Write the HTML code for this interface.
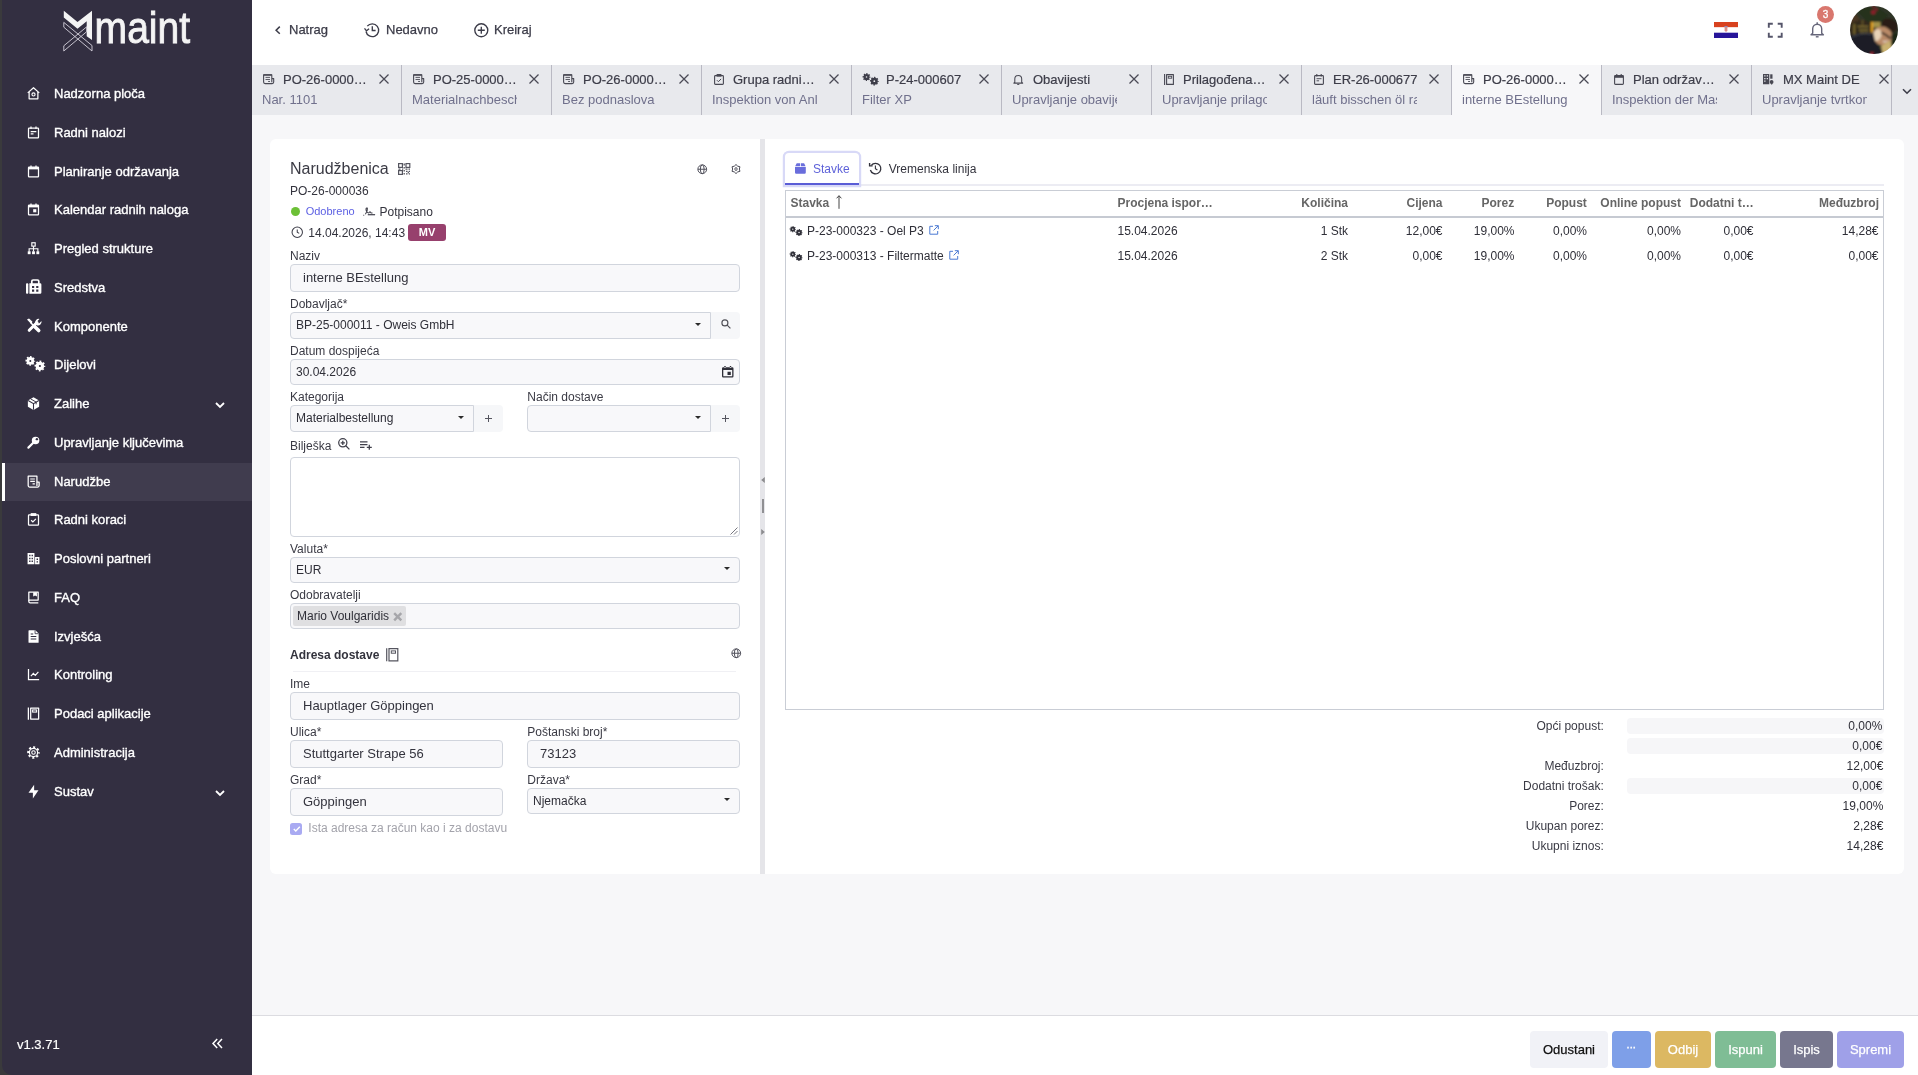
<!DOCTYPE html>
<html lang="hr">
<head>
<meta charset="utf-8">
<title>Narudžbenica PO-26-000036</title>
<style>
*{box-sizing:border-box;margin:0;padding:0}
html,body{width:1918px;height:1075px;overflow:hidden;background:#f7f7f9}
body{font-family:"Liberation Sans",Arial,Helvetica,sans-serif;font-size:12px;color:#33333d;position:relative;-webkit-font-smoothing:antialiased;will-change:transform}
.abs{position:absolute}
svg{display:block;overflow:visible}
/* sidebar */
#side{position:absolute;left:0;top:0;width:252px;height:1075px;background:#332f41}

.mi{position:absolute;left:2px;width:250px;height:38px;color:#fff;font-size:13px;line-height:38px;-webkit-text-stroke:.35px #fff}
.mi span{position:absolute;left:52px;top:0;white-space:nowrap}
.mi svg{position:absolute;left:24px;top:10.5px;width:15px;height:15px;fill:#fff}
.mi.act{background:#403c4e}
.mi.act:before{content:"";position:absolute;left:0;top:0;width:3px;height:100%;background:#fff}
.mi .chev{left:212px;top:14px;width:12px;height:12px;fill:none;stroke:#fff;stroke-width:1.8}
/* header */
#head{position:absolute;left:252px;top:0;width:1666px;height:65px;background:#fff}
.nav{position:absolute;top:22px;font-size:13px;line-height:16px;color:#3b3b48;white-space:nowrap;-webkit-text-stroke:.25px #3b3b48}
/* tab bar */
#tabs{position:absolute;left:252px;top:65px;width:1666px;height:50px;background:#e8e9ed}
.tab{position:absolute;top:0;width:150px;height:50px;border-right:1px solid #b9b9c3}
.tab.on{background:#f7f7f9}
.tab .tt{position:absolute;left:31px;top:7px;width:85px;font-size:13px;line-height:16px;color:#3d3d49;white-space:nowrap;overflow:hidden;text-overflow:ellipsis;-webkit-text-stroke:.2px #3d3d49}
.tab .st{position:absolute;left:10px;top:27px;width:105px;font-size:13px;line-height:16px;color:#70708c;white-space:nowrap;overflow:hidden}
.tab .x{position:absolute;left:127px;top:9px;width:10px;height:10px;stroke:#4a4a55;stroke-width:1.25;fill:none}
/* cards */
.card{position:absolute;background:#fff;border-radius:6px}
.lbl{position:absolute;font-size:12px;line-height:14px;color:#3a3a44;white-space:nowrap}
.inp{position:absolute;background:#f8f8fa;border:1px solid #d1d5dd;border-radius:4px;font-size:13px;color:#33333d;padding-left:12px;white-space:nowrap;overflow:hidden}
.sel{position:absolute;background:#f8f8fa;border:1px solid #d1d5dd;border-radius:4px;font-size:12px;color:#2f2f38;padding-left:5px;white-space:nowrap;overflow:hidden}
.sel:after{content:"";position:absolute;right:8.800px;top:50%;margin-top:-2.600px;border:3.700px solid transparent;border-top:3.800px solid #2b2b2b;border-bottom:0}
.sel.noarr:after{display:none}
.sel.grp{border-radius:4px 0 0 4px}
.btnx{position:absolute;background:#f6f7f9;border-radius:0 4px 4px 0}
/* table */
.th{position:absolute;top:197px;font-size:12px;line-height:14px;font-weight:bold;color:#666;white-space:nowrap}
.td{position:absolute;font-size:12px;line-height:14px;color:#2f2f38;white-space:nowrap}
.r{text-align:right}
.tl{position:absolute;font-size:12px;line-height:14px;color:#3a3a44;white-space:nowrap;text-align:right}
.tbox{position:absolute;left:1627px;width:257px;height:16px;background:#f6f6f8;border-radius:4px}
/* footer */
#foot{position:absolute;left:252px;top:1015px;width:1666px;height:60px;background:#fff;border-top:1px solid #dcdce1}
.btn{position:absolute;top:1031px;height:37px;border-radius:4px;font-size:13px;line-height:37px;text-align:center;color:#fff;white-space:nowrap;-webkit-text-stroke:.25px currentColor}
</style>
</head>
<body>

<!-- SIDEBAR -->
<div id="side">
<svg class="abs" style="left:64px;top:10px" width="130" height="44" viewBox="64 10 130 44"><path d="M63.800 10.800 77.500 22.100 92 10.800V40l-5.300-3.700v-15l-9.200 7.500-13.700-11.300z" fill="#f4f4f4"/><path d="M63.800 22.400 92 45.500V51L63.800 27.200zM63.800 45.800l22.900-19v4.900L63.800 51z" fill="none" stroke="#d6d3dc" stroke-width=".9"/><text x="94.600" y="42.900" font-family="Liberation Sans,Arial,sans-serif" font-size="44.600" fill="#f4f4f4" stroke="#f4f4f4" stroke-width=".9" textLength="95.500" lengthAdjust="spacingAndGlyphs">maint</text></svg>
<div class="mi" style="top:75.1px"><svg viewBox="0 0 24 24"><path d="M2.800 11 12 2.800l9.200 8.200" fill="none" stroke="#fff" stroke-width="2" stroke-linejoin="round"/><path d="M5 9.500V20.500h14V9.500" fill="none" stroke="#fff" stroke-width="2" stroke-linejoin="round"/><circle cx="12" cy="13.500" r="2.500" fill="none" stroke="#fff" stroke-width="1.800"/></svg><span>Nadzorna ploča</span></div>
<div class="mi" style="top:114.1px"><svg viewBox="0 0 24 24"><rect x="4" y="5" width="16" height="15.500" rx="1" fill="none" stroke="#fff" stroke-width="2"/><path d="M8 2.200v4M16 2.200v4" stroke="#fff" stroke-width="2"/><path d="M7.500 10.500h9M7.500 14.200h4.500" stroke="#fff" stroke-width="1.800"/></svg><span>Radni nalozi</span></div>
<div class="mi" style="top:153.1px"><svg viewBox="0 0 24 24"><rect x="4" y="5" width="16" height="15.500" rx="1" fill="none" stroke="#fff" stroke-width="2"/><path d="M4 5h16v3.600H4z"/><path d="M8 2.200v4M16 2.200v4" stroke="#fff" stroke-width="2"/></svg><span>Planiranje održavanja</span></div>
<div class="mi" style="top:191.1px"><svg viewBox="0 0 24 24"><rect x="4" y="5" width="16" height="15.500" rx="1" fill="none" stroke="#fff" stroke-width="2"/><path d="M4 5h16v3.600H4z"/><path d="M8 2.200v4M16 2.200v4" stroke="#fff" stroke-width="2"/><rect x="11.500" y="11.500" width="5" height="5"/></svg><span>Kalendar radnih naloga</span></div>
<div class="mi" style="top:230.1px"><svg viewBox="0 0 24 24"><rect x="9.300" y="2.800" width="5.400" height="5.400" fill="none" stroke="#fff" stroke-width="1.800"/><path d="M12 8.200v8.500M5 17v-4.600h14V17" fill="none" stroke="#fff" stroke-width="1.800"/><rect x="2.800" y="16.500" width="4.600" height="4.600"/><rect x="9.700" y="16.500" width="4.600" height="4.600"/><rect x="16.600" y="16.500" width="4.600" height="4.600"/></svg><span>Pregled strukture</span></div>
<div class="mi" style="top:269.1px"><svg viewBox="0 0 15.400 14.700" style="left:23.8px;top:10.05px;width:15.4px;height:14.7px"><path d="M5.800 5V2.300a1.300 1.300 0 0 1 1.300-1.300h4.400a1.300 1.300 0 0 1 1.300 1.300V5" fill="none" stroke="#fff" stroke-width="1.700"/><rect x="0" y="4.300" width="2.300" height="10.400" rx=".9"/><path fill-rule="evenodd" d="M3.400 4.300h10.800a1.200 1.200 0 0 1 1.200 1.200v8a1.200 1.200 0 0 1-1.200 1.200H3.400zM6 7v2.100h2.200V7zM10.200 7v2.100h2.200V7zM6 10.600v2.100h2.200v-2.100zM10.200 10.600v2.100h2.200v-2.100z"/></svg><span>Sredstva</span></div>
<div class="mi" style="top:308.1px"><svg viewBox="0 0 15.400 15" style="left:23.8px;top:9.7px;width:15.4px;height:15px"><path d="M3.200 12.300 11 4.500" stroke="#fff" stroke-width="3" stroke-linecap="round"/><path d="M9.300 5.500a3.600 3.600 0 0 1 4.200-4.600l-2.200 2.300.3 1.700 1.700.3 2.200-2.200a3.600 3.600 0 0 1-4.600 4.200z"/><path d="M1 1.400 3 .4l3.300 3-.3 1.500-1.500.3z"/><path d="M4.500 4.500l4 4" stroke="#fff" stroke-width="1.600"/><path d="M8.800 8.700l3.900 3.900" stroke="#fff" stroke-width="3.600" stroke-linecap="round"/></svg><span>Komponente</span></div>
<div class="mi" style="top:346.1px"><svg viewBox="0 0 19 15" style="left:23.8px;top:10.2px;width:19px;height:15px"><circle cx="4.3" cy="4.9" r="2.4" fill="none" stroke="#fff" stroke-width="2.8"/><circle cx="4.3" cy="4.9" r="4.0" fill="none" stroke="#fff" stroke-width="1.7" stroke-dasharray="1.571 1.571" stroke-dashoffset="0.785"/><circle cx="13.9" cy="10" r="2.7" fill="none" stroke="#fff" stroke-width="3.2"/><circle cx="13.9" cy="10" r="4.5" fill="none" stroke="#fff" stroke-width="1.8" stroke-dasharray="1.767 1.767" stroke-dashoffset="0.884"/></svg><span>Dijelovi</span></div>
<div class="mi" style="top:385.1px"><svg viewBox="0 0 24 24"><path d="M12 1.800 21 7v10l-9 5.200L3 17V7z"/><path d="M3.400 7.200 12 12.200l8.600-5M12 12.200V22" fill="none" stroke="#332f41" stroke-width="1.700"/><path d="M7.400 4.600l8.800 5.100v3.600" fill="none" stroke="#332f41" stroke-width="1.500"/></svg><span>Zalihe</span><svg class="chev" viewBox="0 0 12 12"><path d="M2 4l4 4 4-4"/></svg></div>
<div class="mi" style="top:424.1px"><svg viewBox="0 0 24 24"><path d="M11.200 12.800 3.800 20.200" stroke="#fff" stroke-width="3.400" stroke-linecap="round"/><circle cx="15.300" cy="8.700" r="6"/><circle cx="17.400" cy="6.600" r="1.900" fill="#332f41"/></svg><span>Upravljanje ključevima</span></div>
<div class="mi act" style="top:463.1px"><svg viewBox="0 0 24 24"><path d="M17.500 13V3.500h-14v15a2.500 2.500 0 0 0 2.500 2.500h12.500a2.500 2.500 0 0 0 2.500-2.500V13z" fill="none" stroke="#fff" stroke-width="2" stroke-linejoin="round"/><path d="M17.500 13v6" stroke="#fff" stroke-width="2"/><path d="M6.800 8h7.400M6.800 11.800h7.400M10.500 15.800h3.700" stroke="#fff" stroke-width="1.800"/></svg><span>Narudžbe</span></div>
<div class="mi" style="top:501.1px"><svg viewBox="0 0 24 24"><rect x="4" y="4.500" width="16" height="16.500" rx="1" fill="none" stroke="#fff" stroke-width="2"/><rect x="7.500" y="1.800" width="9" height="4.600"/><path d="M8.200 13.200l2.800 2.800 4.800-5" fill="none" stroke="#fff" stroke-width="1.900"/></svg><span>Radni koraci</span></div>
<div class="mi" style="top:540.1px"><svg viewBox="0 0 24 24"><path fill-rule="evenodd" d="M2.500 3h11v18h-11zM5 6v2.400h2.200V6zM8.900 6v2.400h2.200V6zM5 10.600V13h2.200v-2.400zM8.900 10.600V13h2.200v-2.400zM5 15.200v2.400h2.200v-2.400zM8.900 15.200v2.400h2.200v-2.400z"/><path fill-rule="evenodd" d="M14.500 9.500h7V21h-7zM16.900 12v2.300h2.300V12zM16.900 16.200v2.300h2.300v-2.300z"/></svg><span>Poslovni partneri</span></div>
<div class="mi" style="top:579.1px"><svg viewBox="0 0 24 24"><path d="M4.500 3.500h15V16h-15z" fill="none" stroke="#fff" stroke-width="2" stroke-linejoin="round"/><path d="M4.500 16v2.300a2.200 2.200 0 0 0 2.200 2.200h13" fill="none" stroke="#fff" stroke-width="2"/><path d="M11.500 3.500h6v7l-3-1.800-3 1.800z"/></svg><span>FAQ</span></div>
<div class="mi" style="top:618.1px"><svg viewBox="0 0 24 24"><path d="M5 1.800h10l5.200 5.200v14a1 1 0 0 1-1 1H5a1 1 0 0 1-1-1V2.800a1 1 0 0 1 1-1z"/><path d="M7.500 8h4M7.500 12h9M7.500 16h9" stroke="#332f41" stroke-width="1.800"/><path d="M14.500 2v5.500H20" fill="none" stroke="#332f41" stroke-width="1.300"/></svg><span>Izvješća</span></div>
<div class="mi" style="top:656.1px"><svg viewBox="0 0 24 24"><path d="M4 3v17.200h17" fill="none" stroke="#fff" stroke-width="2"/><path d="M7.800 14.500l4-4.200 3 3 5-5.600" fill="none" stroke="#fff" stroke-width="1.900"/></svg><span>Kontroling</span></div>
<div class="mi" style="top:695.1px"><svg viewBox="0 0 24 24"><path d="M7.500 3.200h12.700v17.600H7.500z" fill="none" stroke="#fff" stroke-width="2" stroke-linejoin="round"/><path d="M3.800 2.200v19.600" stroke="#fff" stroke-width="2"/><rect x="10.600" y="6.300" width="6.400" height="3.400" fill="none" stroke="#fff" stroke-width="1.700"/></svg><span>Podaci aplikacije</span></div>
<div class="mi" style="top:734.1px"><svg viewBox="0 0 24 24"><circle cx="12" cy="12" r="6.6" fill="none" stroke="#fff" stroke-width="1.9"/><circle cx="12" cy="12" r="8.6" fill="none" stroke="#fff" stroke-width="3" stroke-dasharray="3.377 3.377" stroke-dashoffset="1.689"/><circle cx="12" cy="12" r="2.800" fill="none" stroke="#fff" stroke-width="1.800"/></svg><span>Administracija</span></div>
<div class="mi" style="top:773.1px"><svg viewBox="0 0 24 24"><path d="M13 10h7l-9 13v-9H4l9-13v9z"/></svg><span>Sustav</span><svg class="chev" viewBox="0 0 12 12"><path d="M2 4l4 4 4-4"/></svg></div>
<div class="abs" style="left:17px;top:1037px;font-size:13px;line-height:16px;color:#fff;-webkit-text-stroke:.2px #fff">v1.3.71</div>
<svg class="abs" style="left:212px;top:1038px" width="11" height="11" viewBox="0 0 11 11" fill="none" stroke="#fff" stroke-width="1.500"><path d="M5.200 1 1 5.500l4.200 4.500M10 1 5.800 5.500 10 10"/></svg>
<div class="abs" style="left:0;top:0;width:2px;height:1075px;background:#3a3a3c"></div>
<svg class="abs" style="left:2px;top:1065px" width="10" height="10" viewBox="0 0 10 10"><path d="M0 0v10h10A10 10 0 0 1 0 0z" fill="#3a3a3c"/></svg>
</div>

<!-- HEADER -->
<div id="head">
<svg class="abs" style="left:23.400px;top:26.200px" width="5.600" height="8.400" viewBox="0 0 5.600 8.400" fill="none" stroke="#3b3b48" stroke-width="1.500"><path d="M4.800.6 1.100 4.200l3.700 3.600"/></svg>
<div class="nav" style="left:37px">Natrag</div>
<svg class="abs" style="left:112.300px;top:22.400px" width="16" height="16" viewBox="0 0 16 16" fill="none" stroke="#3b3b48" stroke-width="1.350"><path d="M3.300 4.200A6.400 6.400 0 1 1 2 9.500"/><path d="M.5 6.300l2 2.500 2.600-2" stroke-width="1.300"/><path d="M8.300 4.300v4.200h3.300"/></svg>
<div class="nav" style="left:134px">Nedavno</div>
<svg class="abs" style="left:221.800px;top:22.800px" width="14.600" height="14.600" viewBox="0 0 14.600 14.600" fill="none" stroke="#3b3b48" stroke-width="1.350"><circle cx="7.300" cy="7.300" r="6.500"/><path d="M7.300 3.800v7M3.800 7.300h7"/></svg>
<div class="nav" style="left:242px">Kreiraj</div>
<svg class="abs" style="left:1462px;top:22px" width="24" height="16" viewBox="0 0 24 16"><rect width="24" height="5.400" fill="#d8421f"/><rect y="5.400" width="24" height="5.300" fill="#fff"/><rect y="10.700" width="24" height="5.300" fill="#27159a"/><path d="M10.600 5h2.800v3.300a1.400 1.400 0 0 1-2.800 0z" fill="#dd8f88"/><path d="M10.400 4.100h3.200v1H10.400z" fill="#8c93c9"/></svg>
<svg class="abs" style="left:1516px;top:23px" width="14.500" height="14.500" viewBox="0 0 14.500 14.500" fill="none" stroke="#55556a" stroke-width="1.900"><path d="M.8 4.800V.8h4M9.700.8h4v4M13.700 9.700v4h-4M4.800 13.700h-4v-4"/></svg>
<svg class="abs" style="left:1557.500px;top:22.300px" width="14.400" height="15.600" viewBox="0 0 14.400 15.600" fill="none" stroke="#66667a" stroke-width="1.400"><path d="M2.700 11.300V6.800a4.500 4.500 0 0 1 9 0v4.500l1.700 1.500H1z" stroke-linejoin="round"/><path d="M5.800 14.800h2.800"/><path d="M7.200.3v2"/></svg>
<div class="abs" style="left:1565px;top:5.500px;width:17px;height:17px;border-radius:50%;background:#d9776e;color:#fff;font-size:10px;line-height:17px;text-align:center;-webkit-text-stroke:.3px #fff">3</div>
<svg class="abs" style="left:1598.200px;top:5.800px" width="48" height="48" viewBox="0 0 48 48"><defs><clipPath id="av"><circle cx="24" cy="24" r="24"/></clipPath><filter id="bl" x="-10%" y="-10%" width="120%" height="120%"><feGaussianBlur stdDeviation="1.1"/></filter></defs><g clip-path="url(#av)"><g filter="url(#bl)"><rect x="-4" y="-4" width="56" height="56" fill="#2e3627"/><path d="M-2 14h24v18H-2z" fill="#33291a"/><path d="M-2 9l8-1 4 6-12 4z" fill="#4a3524"/><path d="M8 6c5-5 14-6 22-3l8 6-6 8-14-1z" fill="#27301f"/><path d="M7.500 20.500h11M9 24h9.500M10 27h8" stroke="#8f7d3c" stroke-width="1.600" opacity=".85"/><path d="M4.300 18v12" stroke="#7d6c30" stroke-width="1.800"/><path d="M12.500 14v6" stroke="#5d4f28" stroke-width="2"/><rect x="20.800" y="16" width="2.200" height="10.500" fill="#e2a11f"/><rect x="23" y="16" width="7.500" height="5.500" fill="#a4924a"/><circle cx="23.300" cy="6.300" r="2.300" fill="#8d1f2b"/><circle cx="26.300" cy="3.600" r="1.400" fill="#8d1f2b"/><circle cx="23.500" cy="1" r="1.300" fill="#7d1f28"/><ellipse cx="39.500" cy="19.500" rx="8.500" ry="7" fill="#2a1e17" transform="rotate(25 39.500 19.500)"/><ellipse cx="32.500" cy="30" rx="10" ry="9.200" fill="#b98a68" transform="rotate(30 32.500 30)"/><ellipse cx="27.200" cy="29" rx="4.200" ry="6" fill="#e9d3b6" transform="rotate(15 27.200 29)"/><path d="M31.500 26.500l4.500 2.500 4.500 3.500" stroke="#2a211c" stroke-width="1.700" fill="none"/><path d="M33 35c1.500 1.200 3.500 1 4.500-.5" stroke="#e8dccd" stroke-width="1.200" fill="none"/><path d="M-2 31C6 26.500 16 26 23.500 27.500L25 35l4 6 4 9H-2z" fill="#1d1e25"/><path d="M2 31c6-3.500 13-4 20-3" stroke="#3d4049" stroke-width="1.300" fill="none"/><path d="M31 40l9.500-5.500 1.500 9L33 49z" fill="#c9b170"/><path d="M41 29l7-3v16l-5 1z" fill="#1d2519"/><circle cx="22" cy="47.500" r="1.700" fill="#8d1f2b"/></g></g></svg>
</div>

<!-- TABS -->
<div id="tabs">
<div class="tab" style="left:0px"><svg class="abs" style="left:10.85px;top:9.05px" width="11.3" height="10.1" viewBox="0 0 11.300 10.100"><path d="M8.800 4.600V.7H.6v7.400a1.500 1.500 0 0 0 1.500 1.500h7.100a1.500 1.500 0 0 0 1.500-1.500V4.600zM8.800 4.600v3.700" fill="none" stroke="#484853" stroke-width="1.1" stroke-linejoin="round"/><path d="M.6 1h8.200" fill="none" stroke="#484853" stroke-width="1.5"/><path d="M2.500 3.400h4.500M2.500 5.500h4.500M5.100 7.500h1.900" fill="none" stroke="#484853" stroke-width="0.9"/></svg><div class="tt">PO-26-000001</div><div class="st">Nar. 1101</div><svg class="x" viewBox="0 0 10 10"><path d="M.5.500l9 9M9.500.500l-9 9"/></svg></div>
<div class="tab" style="left:150px"><svg class="abs" style="left:10.85px;top:9.05px" width="11.3" height="10.1" viewBox="0 0 11.300 10.100"><path d="M8.800 4.600V.7H.6v7.400a1.500 1.500 0 0 0 1.500 1.500h7.100a1.500 1.500 0 0 0 1.500-1.500V4.600zM8.800 4.600v3.700" fill="none" stroke="#484853" stroke-width="1.1" stroke-linejoin="round"/><path d="M.6 1h8.200" fill="none" stroke="#484853" stroke-width="1.5"/><path d="M2.500 3.400h4.500M2.500 5.500h4.500M5.100 7.500h1.900" fill="none" stroke="#484853" stroke-width="0.9"/></svg><div class="tt">PO-25-000012</div><div class="st">Materialnachbeschaffung</div><svg class="x" viewBox="0 0 10 10"><path d="M.5.500l9 9M9.500.500l-9 9"/></svg></div>
<div class="tab" style="left:300px"><svg class="abs" style="left:10.85px;top:9.05px" width="11.3" height="10.1" viewBox="0 0 11.300 10.100"><path d="M8.800 4.600V.7H.6v7.400a1.500 1.500 0 0 0 1.500 1.500h7.100a1.500 1.500 0 0 0 1.500-1.500V4.600zM8.800 4.600v3.700" fill="none" stroke="#484853" stroke-width="1.1" stroke-linejoin="round"/><path d="M.6 1h8.200" fill="none" stroke="#484853" stroke-width="1.5"/><path d="M2.500 3.400h4.500M2.500 5.500h4.500M5.100 7.500h1.900" fill="none" stroke="#484853" stroke-width="0.9"/></svg><div class="tt">PO-26-000002</div><div class="st">Bez podnaslova</div><svg class="x" viewBox="0 0 10 10"><path d="M.5.500l9 9M9.500.500l-9 9"/></svg></div>
<div class="tab" style="left:450px"><svg class="abs" style="left:11.50px;top:8.60px" width="10" height="11" viewBox="0 0 10 11"><rect x=".6" y="1.600" width="8.800" height="8.800" rx=".8" fill="none" stroke="#484853" stroke-width="1.1"/><rect x="2.600" y="0" width="4.800" height="2.600" fill="#484853"/><path d="M2.900 6.200l1.500 1.500 2.700-2.800" fill="none" stroke="#484853" stroke-width="1"/></svg><div class="tt">Grupa radnih koraka</div><div class="st">Inspektion von Anlagen</div><svg class="x" viewBox="0 0 10 10"><path d="M.5.500l9 9M9.500.500l-9 9"/></svg></div>
<div class="tab" style="left:600px"><svg class="abs" style="left:10.500px;top:7.800px" width="15.5" height="12.2" viewBox="0 0 19 15"><circle cx="4.3" cy="4.9" r="2.4" fill="none" stroke="#3d3d49" stroke-width="2.8"/><circle cx="4.3" cy="4.9" r="4.0" fill="none" stroke="#3d3d49" stroke-width="1.7" stroke-dasharray="1.571 1.571" stroke-dashoffset="0.785"/><circle cx="13.9" cy="10" r="2.7" fill="none" stroke="#3d3d49" stroke-width="3.2"/><circle cx="13.9" cy="10" r="4.5" fill="none" stroke="#3d3d49" stroke-width="1.8" stroke-dasharray="1.767 1.767" stroke-dashoffset="0.884"/></svg><div class="tt" style="left:34px">P-24-000607</div><div class="st">Filter XP</div><svg class="x" viewBox="0 0 10 10"><path d="M.5.500l9 9M9.500.500l-9 9"/></svg></div>
<div class="tab" style="left:750px"><svg class="abs" style="left:11.25px;top:8.60px" width="10.5" height="11" viewBox="0 0 10.500 11"><path d="M1.800 8.200V5a3.450 3.450 0 0 1 6.900 0v3.200l1 .9H.8z" fill="none" stroke="#484853" stroke-width="1.05" stroke-linejoin="round"/><path d="M4.200 10.400h2.100" fill="none" stroke="#484853" stroke-width="1"/></svg><div class="tt">Obavijesti</div><div class="st">Upravljanje obavijestima</div><svg class="x" viewBox="0 0 10 10"><path d="M.5.500l9 9M9.500.500l-9 9"/></svg></div>
<div class="tab" style="left:900px"><svg class="abs" style="left:11.50px;top:8.60px" width="10" height="11" viewBox="0 0 10 11"><path d="M2.600.6h6.800v9.800H2.600z" fill="none" stroke="#484853" stroke-width="1.1" stroke-linejoin="round"/><path d="M.6 0v11" fill="none" stroke="#484853" stroke-width="1.1"/><rect x="4.300" y="2.300" width="3.400" height="1.900" fill="none" stroke="#484853" stroke-width="0.9"/></svg><div class="tt">Prilagođena polja</div><div class="st">Upravljanje prilagođenim</div><svg class="x" viewBox="0 0 10 10"><path d="M.5.500l9 9M9.500.500l-9 9"/></svg></div>
<div class="tab" style="left:1050px"><svg class="abs" style="left:11.50px;top:8.60px" width="10" height="11" viewBox="0 0 10 11"><rect x=".6" y="1.600" width="8.800" height="8.800" rx=".8" fill="none" stroke="#484853" stroke-width="1.1"/><path d="M2.800 0v2.600M7.200 0v2.600" fill="none" stroke="#484853" stroke-width="1.1"/><path d="M2.500 4.700h5M2.500 6.800h2.600" fill="none" stroke="#484853" stroke-width="0.95"/></svg><div class="tt">ER-26-000677</div><div class="st">läuft bisschen öl raus</div><svg class="x" viewBox="0 0 10 10"><path d="M.5.500l9 9M9.500.500l-9 9"/></svg></div>
<div class="tab on" style="left:1200px"><svg class="abs" style="left:10.85px;top:9.05px" width="11.3" height="10.1" viewBox="0 0 11.300 10.100"><path d="M8.800 4.600V.7H.6v7.400a1.500 1.500 0 0 0 1.500 1.500h7.100a1.500 1.500 0 0 0 1.500-1.500V4.600zM8.800 4.600v3.700" fill="none" stroke="#484853" stroke-width="1.1" stroke-linejoin="round"/><path d="M.6 1h8.200" fill="none" stroke="#484853" stroke-width="1.5"/><path d="M2.500 3.400h4.500M2.500 5.500h4.500M5.100 7.500h1.900" fill="none" stroke="#484853" stroke-width="0.9"/></svg><div class="tt">PO-26-000036</div><div class="st">interne BEstellung</div><svg class="x" viewBox="0 0 10 10"><path d="M.5.500l9 9M9.500.500l-9 9"/></svg></div>
<div class="tab" style="left:1350px"><svg class="abs" style="left:11.50px;top:8.60px" width="10" height="11" viewBox="0 0 10 11"><rect x=".6" y="1.600" width="8.800" height="8.800" rx=".8" fill="none" stroke="#484853" stroke-width="1.1"/><path d="M.6 1.600h8.800v2.200H.6z" fill="#484853"/><path d="M2.800 0v2.600M7.200 0v2.600" fill="none" stroke="#484853" stroke-width="1.1"/></svg><div class="tt">Plan održavanja</div><div class="st">Inspektion der Maschine</div><svg class="x" viewBox="0 0 10 10"><path d="M.5.500l9 9M9.500.500l-9 9"/></svg></div>
<div class="tab" style="left:1500px;width:140px"><svg class="abs" style="left:11.25px;top:8.85px" width="10.5" height="10.5" viewBox="0 0 10.500 10.500"><path fill-rule="evenodd" fill="#484853" d="M0 0h6.300v10.200H0zM1.200 1.300v1.300h1.300V1.300zM3.700 1.300v1.300H5V1.300zM1.200 3.900v1.300h1.300V3.900zM3.700 3.900v1.300H5V3.900zM1.200 6.500v1.300h1.300V6.500z"/><path d="M7.200.3h2.300v4.400H7.200z" fill="#484853"/><circle cx="8.600" cy="8" r="1.900" fill="#484853"/><path d="M8.600 8v2.500" stroke="#484853" stroke-width="1.200"/></svg><div class="tt">MX Maint DE</div><div class="st">Upravljanje tvrtkom</div><svg class="x" viewBox="0 0 10 10"><path d="M.5.500l9 9M9.500.500l-9 9"/></svg></div>
<svg class="abs" style="left:1650px;top:22.500px" width="10" height="7" viewBox="0 0 10 7" fill="none" stroke="#3d3d49" stroke-width="1.600"><path d="M1 1.200l4 4 4-4"/></svg>
</div>

<!-- LEFT CARD -->
<div class="card" id="lc" style="left:270px;top:139px;width:490px;height:734.500px;border-radius:6px 0 0 6px">
<div class="abs" style="left:20px;top:20px;font-size:16px;line-height:19px;color:#3a3a44;white-space:nowrap">Narudžbenica</div>
<svg class="abs" style="left:128.3px;top:23.5px" width="12.5" height="12" viewBox="0 0 12.500 12" fill="none" stroke="#55555f" stroke-width="1.200"><rect x=".6" y=".6" width="3.800" height="3.800"/><rect x="8" y=".6" width="3.800" height="3.800"/><rect x=".6" y="7.600" width="3.800" height="3.800"/><path d="M6.200.5v2M6.200 4v1.500M7.500 6.200h2M10.500 6.200h1.500M.5 6.200h2M4 6.200h1.200M6.200 7v1.500M6.200 10v1.500M8 8.300h1.500M10.800 8.300H12M8 10.800h1.500M10.800 10.800H12M9.700 9.500h1.200" stroke-width="1.300"/></svg>
<svg class="abs" style="left:426.7px;top:24.5px" width="10.500" height="10.500" viewBox="0 0 24 24" fill="none" stroke="#4a4a55" stroke-width="2.200"><circle cx="12" cy="12" r="10"/><ellipse cx="12" cy="12" rx="4.300" ry="10"/><path d="M2 12h20"/></svg>
<svg class="abs" style="left:460.500px;top:24.900px" width="10" height="10.100" viewBox="0 0 10 10.100" fill="none" stroke="#4a4a55" stroke-width="1" stroke-linejoin="round"><path d="M5.00 0.50 6.68 2.15 8.94 2.78 8.35 5.05 8.94 7.32 6.68 7.95 5.00 9.60 3.33 7.95 1.06 7.32 1.65 5.05 1.06 2.77 3.32 2.15z"/><ellipse cx="5" cy="5.050" rx="1.150" ry="1.450" stroke-width=".9"/></svg>
<div class="lbl" style="left:20px;top:45.3px;color:#33333d">PO-26-000036</div>
<div class="abs" style="left:21px;top:67.7px;width:9px;height:9px;border-radius:50%;background:#6cc036"></div>
<div class="abs" style="left:35.7px;top:65.8px;font-size:11px;line-height:13px;color:#5b5fe3;white-space:nowrap">Odobreno</div>
<svg class="abs" style="left:93px;top:68.300px" width="12.500" height="9" viewBox="0 0 12.500 9" fill="none" stroke="#3f3f4a" stroke-width="1.050"><path d="M2.400 7.300C3.600 5.500 4.600 3 4.400 1.600 4.200.5 3 .8 3 2.200c0 1.700 1.400 3.700 2.500 3.700.8 0 .9-1.200 1.500-1.200s.5 1.200 1.300 1.200h1.200"/><path d="M4.800 7.700h7.300" stroke-width="1.200"/><path d="M.3 8.300h.9" stroke-width="1.100"/></svg>
<div class="lbl" style="left:109.5px;top:66.1px;color:#33333d">Potpisano</div>
<svg class="abs" style="left:20.5px;top:86.8px" width="12.500" height="12.500" viewBox="0 0 24 24" fill="none" stroke="#3f3f4a" stroke-width="2"><circle cx="12" cy="12" r="10"/><path d="M12 6.500V12l3.800 2.200"/></svg>
<div class="lbl" style="left:38.3px;top:86.5px;color:#33333d">14.04.2026, 14:43</div>
<div class="abs" style="left:138px;top:85px;width:38px;height:16.500px;border-radius:3px;background:#97406d;color:#fff;font-size:11px;font-weight:bold;line-height:16.500px;text-align:center">MV</div>
<div class="lbl" style="left:20px;top:110px">Naziv</div>
<div class="inp" style="left:20px;top:125px;width:450px;height:28px;line-height:26px">interne BEstellung</div>
<div class="lbl" style="left:20px;top:158.1px">Dobavljač*</div>
<div class="sel grp" style="left:20px;top:173px;width:421px;height:26.5px;line-height:24.5px">BP-25-000011 - Oweis GmbH</div>
<div class="btnx" style="left:441px;top:173px;width:29px;height:26.500px"><svg class="abs" style="left:9.800px;top:6.800px" width="10" height="10" viewBox="0 0 10 10" fill="none" stroke="#505057" stroke-width="1.150"><circle cx="3.900" cy="3.900" r="3"/><path d="M6.200 6.200l3.200 3.200"/></svg></div>
<div class="lbl" style="left:20px;top:205px">Datum dospijeća</div>
<div class="sel noarr" style="left:20px;top:220.3px;width:450px;height:25.5px;line-height:25.5px">30.04.2026</div>
<svg class="abs" style="left:451.5px;top:226.5px" width="11.500" height="11.500" viewBox="0 0 11.500 11.500"><path fill="#2f2f38" fill-rule="evenodd" d="M1.200 1.200h9.100a1.200 1.200 0 0 1 1.200 1.200v7.900a1.200 1.200 0 0 1-1.200 1.200H1.200A1.200 1.200 0 0 1 0 10.300V2.400a1.200 1.200 0 0 1 1.200-1.200zM1.300 4v6.200h8.900V4zM2.300 0h1.400v2H2.300zM7.800 0h1.400v2H7.800zM5.500 5.800h3.300v3.300H5.500z"/></svg>
<div class="lbl" style="left:20px;top:250.7px">Kategorija</div>
<div class="sel grp" style="left:20px;top:266px;width:184px;height:26.5px;line-height:24.5px">Materialbestellung</div>
<div class="btnx" style="left:204px;top:266px;width:29px;height:26.500px"><svg class="abs" style="left:11px;top:9.500px" width="7" height="7" viewBox="0 0 7 7" fill="none" stroke="#55555f" stroke-width="1"><path d="M3.500 0v7M0 3.500h7"/></svg></div>
<div class="lbl" style="left:257.3px;top:250.7px">Način dostave</div>
<div class="sel grp" style="left:257px;top:266px;width:184px;height:26.5px;line-height:24.5px"></div>
<div class="btnx" style="left:441px;top:266px;width:29px;height:26.500px"><svg class="abs" style="left:11px;top:9.500px" width="7" height="7" viewBox="0 0 7 7" fill="none" stroke="#55555f" stroke-width="1"><path d="M3.500 0v7M0 3.500h7"/></svg></div>
<div class="lbl" style="left:20px;top:300.4px">Bilješka</div>
<svg class="abs" style="left:67.800px;top:298.600px" width="12" height="12" viewBox="0 0 12 12" fill="none" stroke="#3f3f4a" stroke-width="1.250"><circle cx="4.800" cy="4.800" r="4.100"/><path d="M7.800 7.800l3.600 3.600M4.800 2.700v4.200M2.700 4.800h4.200"/></svg>
<svg class="abs" style="left:90.100px;top:301.700px" width="12" height="9" viewBox="0 0 12 9" fill="none" stroke="#3f3f4a" stroke-width="1.300"><path d="M0 .8h7.500M0 3.600h7.500M0 6.400h4.500M9.300 3.800v5M6.800 6.300h5"/></svg>
<div class="abs" style="left:20px;top:318px;width:450px;height:80px;background:#fff;border:1px solid #d1d5dd;border-radius:4px"><svg class="abs" style="right:1px;bottom:1px" width="8" height="8" viewBox="0 0 8 8" stroke="#55555f" stroke-width=".8"><path d="M7.500.5l-7 7M7.500 4l-3.500 3.500"/></svg></div>
<div class="lbl" style="left:20px;top:403.4px">Valuta*</div>
<div class="sel" style="left:20px;top:418px;width:450px;height:26px;line-height:24px">EUR</div>
<div class="lbl" style="left:20px;top:449px">Odobravatelji</div>
<div class="abs" style="left:20px;top:464px;width:450px;height:26px;background:#f8f8fa;border:1px solid #d1d5dd;border-radius:4px"><div class="abs" style="left:2px;top:2px;width:113px;height:20px;background:#dfdfe1;border-radius:2px;font-size:12px;line-height:20px;padding-left:4px;color:#2f2f38;white-space:nowrap">Mario Voulgaridis<svg class="abs" style="left:100px;top:5.500px" width="9.500" height="9.500" viewBox="0 0 9.500 9.500" fill="none" stroke="#a6a6aa" stroke-width="2.400"><path d="M1.200 1.200l7.100 7.100M8.300 1.200 1.200 8.300"/></svg></div></div>
<div class="lbl" style="left:20px;top:509px;font-weight:bold;color:#33333d">Adresa dostave</div>
<svg class="abs" style="left:116px;top:509px" width="12.500" height="13.500" viewBox="0 0 12.500 13.500" fill="none" stroke="#55555f" stroke-width="1.200"><path d="M3 .7h8.800v12.100H3zM.7.200v13.100"/><rect x="5.300" y="2.900" width="4.200" height="2.300" stroke-width="1"/></svg>
<svg class="abs" style="left:460.5px;top:509px" width="10.500" height="10.500" viewBox="0 0 24 24" fill="none" stroke="#4a4a55" stroke-width="2.200"><circle cx="12" cy="12" r="10"/><ellipse cx="12" cy="12" rx="4.300" ry="10"/><path d="M2 12h20"/></svg>
<div class="abs" style="left:23px;top:532px;width:443px;height:1px;background:#f0f0f4"></div>
<div class="lbl" style="left:20px;top:538.3px">Ime</div>
<div class="inp" style="left:20px;top:553px;width:450px;height:28px;line-height:26px">Hauptlager Göppingen</div>
<div class="lbl" style="left:20px;top:586px">Ulica*</div>
<div class="inp" style="left:20px;top:601px;width:213px;height:28px;line-height:26px">Stuttgarter Strape 56</div>
<div class="lbl" style="left:257.3px;top:586px">Poštanski broj*</div>
<div class="inp" style="left:257px;top:601px;width:213px;height:28px;line-height:26px">73123</div>
<div class="lbl" style="left:20px;top:634.2px">Grad*</div>
<div class="inp" style="left:20px;top:649px;width:213px;height:28px;line-height:26px">Göppingen</div>
<div class="lbl" style="left:257.3px;top:634.2px">Država*</div>
<div class="sel" style="left:257px;top:649px;width:213px;height:25.5px;line-height:25.5px">Njemačka</div>
<div class="abs" style="left:20.3px;top:684.3px;width:11.700px;height:11.700px;border-radius:2.500px;background:#a9aaf2"><svg class="abs" style="left:2.300px;top:3px" width="7.500" height="6" viewBox="0 0 7.500 6" fill="none" stroke="#fff" stroke-width="1.400"><path d="M.8 3l2 2L6.800.8"/></svg></div>
<div class="lbl" style="left:38.3px;top:681.7px;color:#a3a3ab">Ista adresa za račun kao i za dostavu</div>
</div>
<div class="abs" style="left:760px;top:139px;width:5px;height:734.500px;background:#e5e5e9"></div>
<!-- RIGHT CARD -->
<div class="card" id="rc" style="left:765px;top:139px;width:1139px;height:734.500px;border-radius:0 6px 6px 0">
<div class="abs" style="left:19px;top:45.1px;width:1100px;height:1.500px;background:#ececf3"></div>
<div class="abs" style="left:20px;top:13.6px;width:74.200px;height:32.400px;border-radius:4px 4px 0 0;background:#fff;box-shadow:0 0 0 2.200px #d8d9f7;border-bottom:2px solid #5a5dd6"></div>
<svg class="abs" style="left:30.1px;top:24.1px" width="10.800" height="10.800" viewBox="0 0 10.800 10.800"><path fill="#696ddc" d="M1.700.3h3.300v2.900H.2zM5.800.3h3.300l1.500 2.900H5.800zM0 4h10.800v5.600a1.200 1.200 0 0 1-1.200 1.200H1.200A1.200 1.200 0 0 1 0 9.600z"/></svg>
<div class="abs" style="left:48px;top:23px;font-size:12px;line-height:14px;color:#5e62d9;white-space:nowrap">Stavke</div>
<svg class="abs" style="left:104.2px;top:23.2px" width="12.400" height="12.400" viewBox="0 0 12.400 12.400" fill="none" stroke="#33333d" stroke-width="1.300"><path d="M2.300 3.400A5.300 5.300 0 1 1 1.400 8"/><path d="M.6.900v3h3" stroke-width="1.400"/><path d="M6.400 3.600v3l2 1.400" stroke-width="1.100"/></svg>
<div class="abs" style="left:123.8px;top:23px;font-size:12px;line-height:14px;color:#33333d;white-space:nowrap">Vremenska linija</div>
<div class="abs" style="left:20px;top:51.2px;width:1099px;height:519.500px;border:1px solid #c9cdd5"></div>
<div class="abs" style="left:21px;top:76.8px;width:1097px;height:2px;background:#c6cad2"></div>
<div class="th" style="left:25.5px;top:57px">Stavka</div>
<svg class="abs" style="left:70.9px;top:56.2px" width="6" height="14" viewBox="0 0 6 14" fill="none" stroke="#444" stroke-width="1"><path d="M3 13.800V.8M.6 3.300 3 .7l2.400 2.600"/></svg>
<div class="th" style="left:352.5px;top:57px">Procjena ispor…</div>
<div class="th r" style="right:556px;top:57px">Količina</div>
<div class="th r" style="right:461.5px;top:57px">Cijena</div>
<div class="th r" style="right:389.8px;top:57px">Porez</div>
<div class="th r" style="right:317.2px;top:57px">Popust</div>
<div class="th r" style="right:223px;top:57px">Online popust</div>
<div class="th" style="left:924.8px;top:57px">Dodatni t…</div>
<div class="th r" style="right:25px;top:57px">Međuzbroj</div>
<svg class="abs" style="left:24.9px;top:87.2px" width="12.400" height="9.800" viewBox="0 0 19 15"><circle cx="4.3" cy="4.9" r="2.4" fill="none" stroke="#2f2f38" stroke-width="2.8"/><circle cx="4.3" cy="4.9" r="4.0" fill="none" stroke="#2f2f38" stroke-width="1.7" stroke-dasharray="1.571 1.571" stroke-dashoffset="0.785"/><circle cx="13.9" cy="10" r="2.7" fill="none" stroke="#2f2f38" stroke-width="3.2"/><circle cx="13.9" cy="10" r="4.5" fill="none" stroke="#2f2f38" stroke-width="1.8" stroke-dasharray="1.767 1.767" stroke-dashoffset="0.884"/></svg>
<div class="td" style="left:42px;top:85px">P-23-000323 - Oel P3</div>
<svg class="abs" style="left:163.5px;top:85.7px" width="10" height="10" viewBox="0 0 10 10" fill="none" stroke="#4a79d2" stroke-width="1"><path d="M4 1.300H.8v7.900h7.900V6M5.800.7h3.500v3.500M9.200.8 4.600 5.400"/></svg>
<div class="td" style="left:352.5px;top:85px">15.04.2026</div>
<div class="td r" style="right:556px;top:85px">1 Stk</div>
<div class="td r" style="right:461.5px;top:85px">12,00€</div>
<div class="td r" style="right:389.5px;top:85px">19,00%</div>
<div class="td r" style="right:317px;top:85px">0,00%</div>
<div class="td r" style="right:223px;top:85px">0,00%</div>
<div class="td r" style="right:150.5px;top:85px">0,00€</div>
<div class="td r" style="right:25.5px;top:85px">14,28€</div>
<svg class="abs" style="left:24.9px;top:112.2px" width="12.400" height="9.800" viewBox="0 0 19 15"><circle cx="4.3" cy="4.9" r="2.4" fill="none" stroke="#2f2f38" stroke-width="2.8"/><circle cx="4.3" cy="4.9" r="4.0" fill="none" stroke="#2f2f38" stroke-width="1.7" stroke-dasharray="1.571 1.571" stroke-dashoffset="0.785"/><circle cx="13.9" cy="10" r="2.7" fill="none" stroke="#2f2f38" stroke-width="3.2"/><circle cx="13.9" cy="10" r="4.5" fill="none" stroke="#2f2f38" stroke-width="1.8" stroke-dasharray="1.767 1.767" stroke-dashoffset="0.884"/></svg>
<div class="td" style="left:42px;top:110px">P-23-000313 - Filtermatte</div>
<svg class="abs" style="left:183.5px;top:110.7px" width="10" height="10" viewBox="0 0 10 10" fill="none" stroke="#4a79d2" stroke-width="1"><path d="M4 1.300H.8v7.900h7.900V6M5.800.7h3.500v3.500M9.200.8 4.600 5.400"/></svg>
<div class="td" style="left:352.5px;top:110px">15.04.2026</div>
<div class="td r" style="right:556px;top:110px">2 Stk</div>
<div class="td r" style="right:461.5px;top:110px">0,00€</div>
<div class="td r" style="right:389.5px;top:110px">19,00%</div>
<div class="td r" style="right:317px;top:110px">0,00%</div>
<div class="td r" style="right:223px;top:110px">0,00%</div>
<div class="td r" style="right:150.5px;top:110px">0,00€</div>
<div class="td r" style="right:25.5px;top:110px">0,00€</div>
<div class="tbox" style="left:862px;top:579px"></div>
<div class="tl" style="right:300.2px;top:580px">Opći popust:</div>
<div class="tl" style="right:21.7px;top:580px;color:#2f2f38">0,00%</div>
<div class="tbox" style="left:862px;top:599px"></div>
<div class="tl" style="right:21.7px;top:600px;color:#2f2f38">0,00€</div>
<div class="tl" style="right:300.2px;top:620px">Međuzbroj:</div>
<div class="tl" style="right:20.7px;top:620px;color:#2f2f38">12,00€</div>
<div class="tbox" style="left:862px;top:639px"></div>
<div class="tl" style="right:300.2px;top:640px">Dodatni trošak:</div>
<div class="tl" style="right:21.7px;top:640px;color:#2f2f38">0,00€</div>
<div class="tl" style="right:300.2px;top:660px">Porez:</div>
<div class="tl" style="right:20.7px;top:660px;color:#2f2f38">19,00%</div>
<div class="tl" style="right:300.2px;top:680px">Ukupan porez:</div>
<div class="tl" style="right:20.7px;top:680px;color:#2f2f38">2,28€</div>
<div class="tl" style="right:300.2px;top:700px">Ukupni iznos:</div>
<div class="tl" style="right:20.7px;top:700px;color:#2f2f38">14,28€</div>
</div>
<div class="abs" style="left:761.600px;top:499px;width:2.200px;height:14px;background:#909093"></div>
<svg class="abs" style="left:760.500px;top:477px" width="4" height="6" viewBox="0 0 4 6"><path d="M3.800 0v6L.2 3z" fill="#8c8c8f"/></svg>
<svg class="abs" style="left:760.500px;top:529px" width="4" height="6" viewBox="0 0 4 6"><path d="M.2 0v6l3.600-3z" fill="#8c8c8f"/></svg>

<!-- FOOTER -->
<div id="foot"></div>
<div class="btn" style="left:1530px;width:78px;background:#f1f2f7;color:#111">Odustani</div>
<div class="btn" style="left:1612px;width:39px;background:#7e9fe8;color:#fff;font-size:9px;font-weight:bold;line-height:35.500px;letter-spacing:.1px">···</div>
<div class="btn" style="left:1655px;width:56px;background:#dcb862;color:#fff">Odbij</div>
<div class="btn" style="left:1715px;width:61px;background:#7fbd95;color:#fff">Ispuni</div>
<div class="btn" style="left:1780px;width:53px;background:#77778e;color:#fff">Ispis</div>
<div class="btn" style="left:1837px;width:67px;background:#9fa0e8;color:#fff">Spremi</div>

</body>
</html>
